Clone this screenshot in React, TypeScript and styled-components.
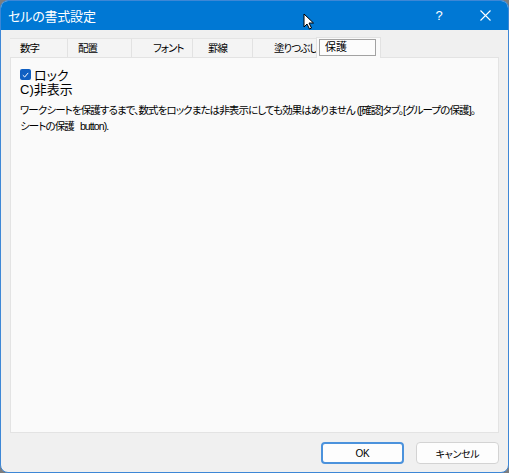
import styled, { createGlobalStyle } from 'styled-components';

const GlobalStyle = createGlobalStyle`
  html, body {
    margin: 0;
    padding: 0;
    background: #7d7d7d;
  }
  body {
    font-family: "Liberation Sans", "Noto Sans CJK JP", sans-serif;
    font-feature-settings: "palt";
  }
`;

const Window = styled.div`
  position: relative;
  box-sizing: border-box;
  width: 509px;
  height: 473px;
  border: 1px solid #3d87d6;
  border-radius: 8px;
  background: #f0f0f0;
  overflow: hidden;
  display: flex;
  flex-direction: column;
`;

const TitleBar = styled.div`
  height: 29px;
  background: #0078d4;
  display: flex;
  align-items: center;
  color: #fff;
`;

const Title = styled.div`
  flex: 1;
  padding-left: 7px;
  font-size: 13px;
  letter-spacing: -0.2px;
`;

const TitleButton = styled.div`
  width: 46px;
  height: 29px;
  display: flex;
  align-items: center;
  justify-content: center;
  font-size: 13px;
`;

const Body = styled.div`
  flex: 1;
  display: flex;
  flex-direction: column;
  padding: 8px 9px 9px 9px;
`;

const TabStrip = styled.div`
  display: flex;
  align-items: flex-end;
  height: 19px;
`;

const Tab = styled.div<{ $w: number; $pad: number }>`
  box-sizing: border-box;
  width: ${(p) => p.$w}px;
  height: 19px;
  padding-left: ${(p) => p.$pad}px;
  background: #f4f4f4;
  border-top: 1px solid #e4e4e4;
  border-right: 1px solid #e2e2e2;
  font-size: 10.5px;
  letter-spacing: -1px;
  line-height: 18px;
  color: #000;
  white-space: nowrap;
`;

const ActiveTab = styled.div`
  box-sizing: border-box;
  width: 65px;
  height: 21px;
  margin-bottom: -1px;
  margin-left: -3px;
  padding: 1px 4px 2px 2px;
  background: #fafafa;
  border: 1px solid #e2e2e2;
  border-bottom: none;
  position: relative;
  z-index: 1;
`;

const FocusBox = styled.div`
  box-sizing: border-box;
  height: 17px;
  border: 1px solid #a2a2a2;
  background: #fcfcfc;
  padding-left: 5px;
  font-size: 11px;
  line-height: 15px;
  color: #000;
`;

const Panel = styled.div`
  flex: 1;
  background: #fafafa;
  border: 1px solid #e3e3e3;
  padding: 9px 9px 0 9px;
  display: flex;
  flex-direction: column;
`;

const CheckRow = styled.label`
  display: flex;
  align-items: center;
  gap: 3px;
  height: 15px;
  font-size: 13px;
  color: #000;
`;

const Check = styled.span`
  width: 11px;
  height: 11px;
  border-radius: 2px;
  background: #0f5fc2;
  display: flex;
  align-items: center;
  justify-content: center;
`;

const Label = styled.div`
  height: 15px;
  font-size: 13px;
  line-height: 15px;
  color: #000;
`;

const Note = styled.p`
  margin: 5px 0 0 0;
  font-size: 10.5px;
  line-height: 16px;
  color: #000;
  letter-spacing: -0.9px;
  white-space: nowrap;
`;

const Gap = styled.span`
  display: inline-block;
  width: 4px;
`;

const Footer = styled.div`
  display: flex;
  justify-content: flex-end;
  gap: 12px;
  padding-top: 9px;
  margin-bottom: -1px;
`;

const Button = styled.button<{ $primary?: boolean }>`
  width: 83px;
  height: 22px;
  box-sizing: border-box;
  border-radius: 4px;
  background: #fdfdfd;
  border: ${(p) => (p.$primary ? '2px solid #4b92dc' : '1px solid #d3d3d3')};
  font-family: "Liberation Sans", "Noto Sans CJK JP", sans-serif;
  font-feature-settings: "palt";
  font-size: 10px;
  letter-spacing: -0.3px;
  color: #000;
  padding: 0;
`;

const Cursor = styled.svg`
  position: absolute;
  left: 302px;
  top: 12px;
`;

export default function App() {
  return (
    <>
      <GlobalStyle />
      <Window>
        <TitleBar>
          <Title>セルの書式設定</Title>
          <TitleButton>?</TitleButton>
          <TitleButton>
            <svg width="11" height="11" viewBox="0 0 11 11">
              <path d="M0.5 0.5 L10.5 10.5 M10.5 0.5 L0.5 10.5" stroke="#fff" strokeWidth="1.1" />
            </svg>
          </TitleButton>
        </TitleBar>
        <Body>
          <TabStrip>
            <Tab $w={58} $pad={10}>数字</Tab>
            <Tab $w={64} $pad={10}>配置</Tab>
            <Tab $w={61} $pad={21}>フォント</Tab>
            <Tab $w={60} $pad={15}>罫線</Tab>
            <Tab $w={66} $pad={21}>塗りつぶし</Tab>
            <ActiveTab>
              <FocusBox>保護</FocusBox>
            </ActiveTab>
          </TabStrip>
          <Panel>
            <CheckRow>
              <Check>
                <svg width="7" height="6" viewBox="0 0 7 6">
                  <path d="M0.8 3.2 L2.7 5 L6.2 0.9" fill="none" stroke="#fff" strokeWidth="1" />
                </svg>
              </Check>
              ロック
            </CheckRow>
            <Label>C)非表示</Label>
            <Note>
              ワークシートを保護するまで、数式をロックまたは非表示にしても効果はありません ([確認]タブ。[グループの保護]。
              <br />
              シートの保護<Gap /> button).
            </Note>
          </Panel>
          <Footer>
            <Button $primary>OK</Button>
            <Button>キャンセル</Button>
          </Footer>
        </Body>
        <Cursor width="12" height="17" viewBox="0 0 12 17">
          <path d="M1 1 L1 14 L4 11 L6.5 16 L8.5 15 L6 10 L10.5 10 Z" fill="#fff" stroke="#000" strokeWidth="1" strokeLinejoin="round" />
        </Cursor>
      </Window>
    </>
  );
}
